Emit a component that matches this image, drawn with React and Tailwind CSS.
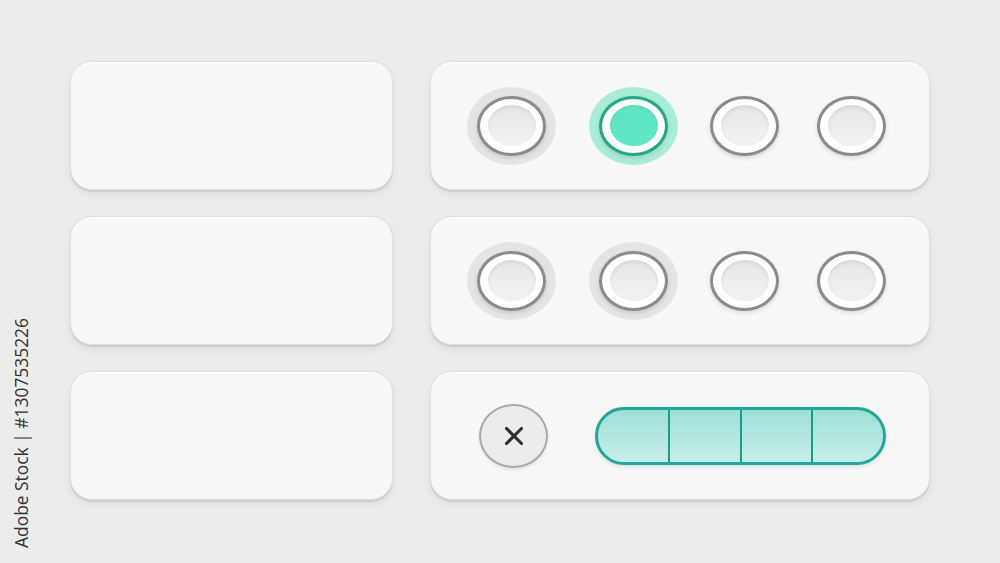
import { X } from "lucide-react"

function Knob({ active = false }) {
  // ring + white rim + soft inner dish
  return (
    <div
      className={
        "flex items-center justify-center rounded-[50%] border-[3px] bg-white w-[69px] h-[60px] shadow-[0_2px_4px_rgba(0,0,0,0.12)] " +
        (active ? "border-[#23a883]" : "border-[#8b8b8b]")
      }
    >
      <div
        className={
          "rounded-[50%] w-[48px] h-[41px] " +
          (active
            ? "bg-[#5fe6c6] shadow-[inset_0_2px_3px_rgba(0,0,0,0.06)]"
            : "bg-[linear-gradient(180deg,#e6e6e6,#f3f3f3)] shadow-[inset_0_2px_4px_rgba(0,0,0,0.08)]")
        }
      />
    </div>
  )
}

function Halo({ active = false, className = "" }) {
  return (
    <div
      className={
        "flex items-center justify-center rounded-[50%] w-[89px] h-[78px] " +
        (active ? "bg-[#a9ecdc]" : "bg-[#e4e4e4]") +
        " " +
        className
      }
    >
      <Knob active={active} />
    </div>
  )
}

function Card({ children, className = "" }) {
  return (
    <div
      className={
        "h-[129px] rounded-[22px] bg-[#f7f7f7] border border-[#dedede] shadow-[inset_0_1px_0_#ffffff,0_2px_0_0_#cfcfcf,0_4px_8px_rgba(0,0,0,0.07)] " +
        className
      }
    >
      {children}
    </div>
  )
}

export default function App() {
  return (
    <div className="relative w-[1000px] h-[563px] overflow-hidden bg-[#ececec] font-['Open_Sans',sans-serif]">
      {/* stock id along the left edge */}
      <div className="absolute left-[13px] top-[318px] text-[17.4px] leading-none text-[#333333] [writing-mode:vertical-rl] rotate-180">
        Adobe Stock | #1307535226
      </div>

      <div className="grid grid-cols-[323px_500px] gap-x-[37px] gap-y-[26px] pt-[61px] pl-[70px]">
        <Card />
        <Card className="flex items-center pl-[36px]">
          <Halo />
          <Halo active className="ml-[33px]" />
          <div className="ml-[32px]">
            <Knob />
          </div>
          <div className="ml-[38px]">
            <Knob />
          </div>
        </Card>

        <Card />
        <Card className="flex items-center pl-[36px]">
          <Halo />
          <Halo className="ml-[33px]" />
          <div className="ml-[32px]">
            <Knob />
          </div>
          <div className="ml-[38px]">
            <Knob />
          </div>
        </Card>

        <Card />
        <Card className="flex items-center pl-[48px]">
          <div className="flex items-center justify-center w-[69px] h-[64px] rounded-[50%] bg-[#ececec] border-2 border-[#a9a9a9] shadow-[0_2px_3px_rgba(0,0,0,0.08)]">
            <X size={30} strokeWidth={2.5} className="text-[#27313d]" />
          </div>
          <div className="ml-[47px] flex w-[291px] h-[58px] rounded-full border-[3px] border-[#1fa89b] overflow-hidden bg-[linear-gradient(180deg,#9fe0d7,#c8eeea)] shadow-[0_2px_4px_rgba(0,0,0,0.1)]">
            <div className="flex-1" />
            <div className="flex-1 border-l-2 border-[#1b9a8e]" />
            <div className="flex-1 border-l-2 border-[#1b9a8e]" />
            <div className="flex-1 border-l-2 border-[#1b9a8e]" />
          </div>
        </Card>
      </div>
    </div>
  )
}
